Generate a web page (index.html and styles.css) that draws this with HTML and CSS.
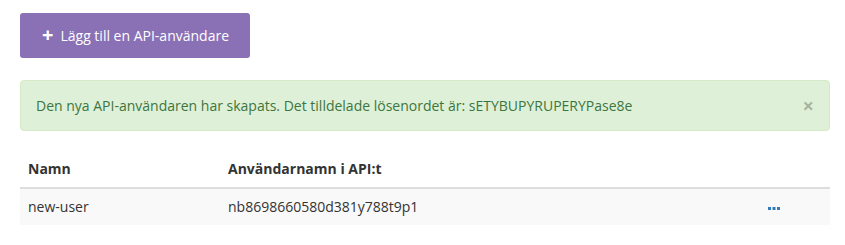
FILE: index.html
```html
<!DOCTYPE html>
<html lang="sv">
<head>
    <meta charset="UTF-8">
    <title>API-användare</title>
    <link rel="stylesheet" href="styles.css">
</head>
<body>
    <div class="page">
        <button class="btn-add">
            <span class="btn-plus">+</span>
            Lägg till en API-användare
        </button>

        <div class="alert-success" role="alert">
            <span class="alert-text">Den nya API-användaren har skapats. Det tilldelade lösenordet är: sETYBUPYRUPERYPase8e</span>
            <button class="alert-close" aria-label="Stäng">&times;</button>
        </div>

        <table class="user-table">
            <thead>
                <tr>
                    <th class="col-name">Namn</th>
                    <th>Användarnamn i API:t</th>
                    <th class="col-actions"></th>
                </tr>
            </thead>
            <tbody>
                <tr>
                    <td>new-user</td>
                    <td>nb8698660580d381y788t9p1</td>
                    <td class="col-actions">
                        <a href="#" class="more-link" aria-label="Fler val">
                            <svg width="12" height="4" viewBox="0 0 12 4">
                                <rect x="0" y="0" width="3" height="3" fill="#337ab7"/>
                                <rect x="4.5" y="0" width="3" height="3" fill="#337ab7"/>
                                <rect x="9" y="0" width="3" height="3" fill="#337ab7"/>
                            </svg>
                        </a>
                    </td>
                </tr>
            </tbody>
        </table>
    </div>
</body>
</html>
```

FILE: styles.css
```css
* {
    margin: 0;
    padding: 0;
    box-sizing: border-box;
}

body {
    font-family: "Open Sans", Arial, sans-serif;
    font-size: 14px;
    line-height: 1.42857;
    color: #333;
    background: #fff;
}

.page {
    padding: 13px 15px 0 20px;
}

.btn-add {
    display: inline-flex;
    align-items: center;
    gap: 7px;
    height: 45px;
    padding: 0 21px 0 22px;
    background-color: #8a70b5;
    color: #fff;
    border: none;
    border-radius: 3px;
    font-family: inherit;
    font-size: 14px;
    cursor: pointer;
}

.btn-plus {
    font-size: 20px;
    font-weight: 700;
    line-height: 1;
    margin-top: -2px;
}

.alert-success {
    display: flex;
    justify-content: space-between;
    align-items: center;
    margin-top: 22px;
    height: 51px;
    padding: 0 15px;
    background-color: #dff0d8;
    border: 1px solid #d6e9c6;
    border-radius: 4px;
    color: #3c763d;
}

.alert-close {
    background: none;
    border: none;
    color: #000;
    opacity: 0.25;
    font-size: 20px;
    font-weight: 700;
    font-family: inherit;
    line-height: 1;
    cursor: pointer;
}

.user-table {
    width: 100%;
    margin-top: 20px;
    border-collapse: collapse;
}

.user-table th {
    text-align: left;
    font-weight: 700;
    padding: 8px 8px;
    height: 37px;
    border-bottom: 2px solid #ddd;
}

.user-table .col-name {
    width: 200px;
}

.user-table td {
    padding: 8px 8px;
    height: 36px;
    background-color: #f9f9f9;
}

.user-table .col-actions {
    width: 70px;
}

.more-link {
    display: inline-block;
    line-height: 0;
    vertical-align: middle;
}
```
